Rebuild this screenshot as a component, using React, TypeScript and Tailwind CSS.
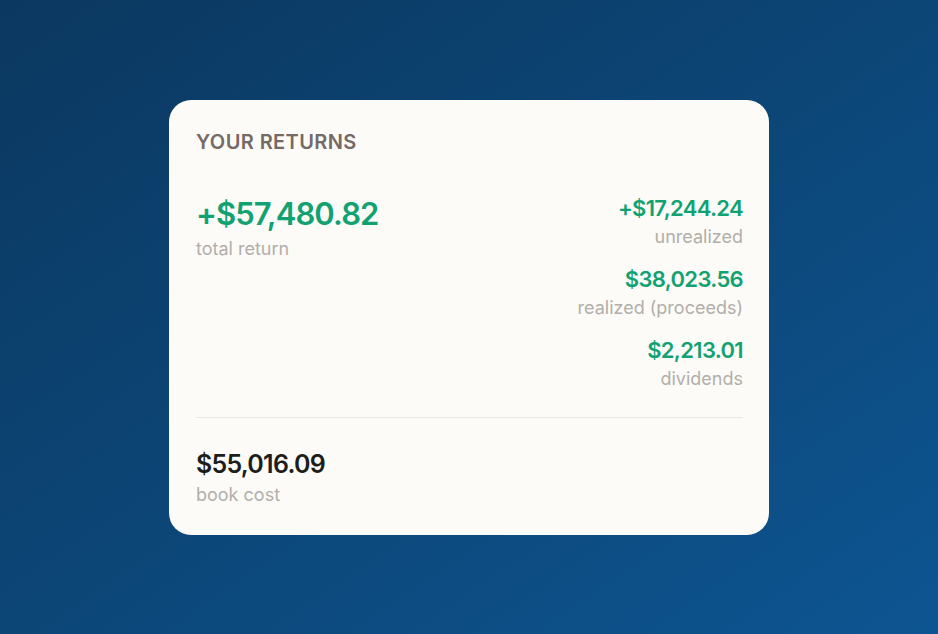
import React from "react"

const breakdown = [
  { amount: "+$17,244.24", label: "unrealized" },
  { amount: "$38,023.56", label: "realized (proceeds)" },
  { amount: "$2,213.01", label: "dividends" },
]

export default function App() {
  return (
    <div
      className="h-screen w-full flex items-center justify-center bg-gradient-to-br from-[#0b3860] via-[#0c4677] to-[#0d5592]"
      style={{ fontFamily: "Inter, 'Noto Sans', sans-serif" }}
    >
      <div className="w-[600px] rounded-[22px] bg-[#fcfbf8] pl-[27px] pr-[26px] pt-[29px] pb-[26px]">
        <h2 className="text-[20px] leading-[26px] font-semibold tracking-[0.02em] text-[#756a65]">
          YOUR RETURNS
        </h2>

        <div className="mt-[38px] flex justify-between">
          <div>
            <div className="text-[31px] leading-[42px] font-semibold tracking-[-0.03em] text-[#12a272]">
              +$57,480.82
            </div>
            <div className="text-[18px] leading-[28px] text-[#b2aea9]">total return</div>
          </div>

          <div className="flex flex-col items-end gap-[13px] text-right">
            {breakdown.map((item) => (
              <div key={item.label}>
                <div className="text-[22px] leading-[30px] font-semibold tracking-[-0.03em] text-[#12a272]">
                  {item.amount}
                </div>
                <div className="text-[18px] leading-[28px] text-[#b2aea9]">{item.label}</div>
              </div>
            ))}
          </div>
        </div>

        <div className="mt-[24px] h-px bg-[#ebe8e3]" />

        <div className="mt-[29px]">
          <div className="text-[25px] leading-[34px] font-semibold tracking-[-0.03em] text-[#1d1d1b]">
            $55,016.09
          </div>
          <div className="text-[18px] leading-[28px] text-[#b2aea9]">book cost</div>
        </div>
      </div>
    </div>
  )
}
